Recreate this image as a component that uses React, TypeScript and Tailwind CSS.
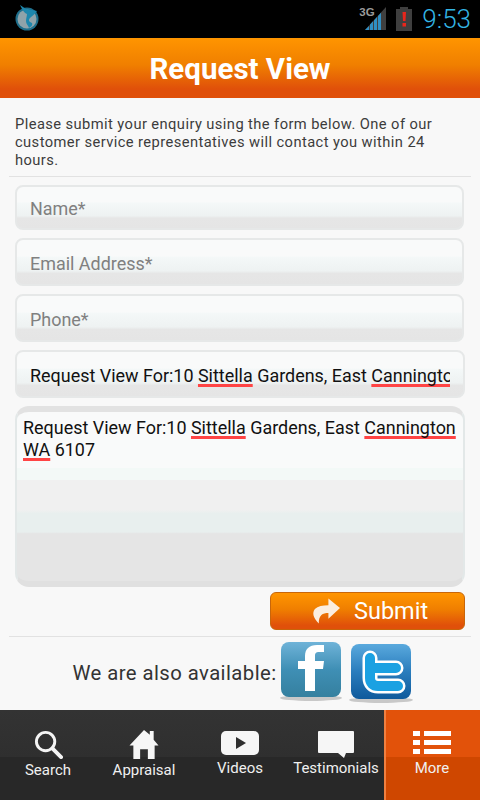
import React from 'react';

const fieldBg = 'bg-[linear-gradient(to_bottom,#f9fafa_0%,#f9fafa_36%,#f4f8f8_40%,#eef2f2_70%,#e6e6e6_76%,#e5e5e5_100%)]';

const Misspelt: React.FC<{ children: React.ReactNode }> = ({ children }) => (
  <span className="underline decoration-[#ff4444] decoration-[3px] underline-offset-[2px] [text-decoration-skip-ink:none]">{children}</span>
);

const Field: React.FC<{ label: string; className: string }> = ({ label, className }) => (
  <div className={`${className} ml-[15px] mr-[16px] flex items-center rounded-lg border-2 border-[#e6e8e8] pl-[13px] text-[17.950px] text-[#808080] ${fieldBg}`}>
    {label}
  </div>
);

const StatusBar = () => (
  <div className="flex h-[38px] items-center bg-black pl-[15px] pr-[9px]">
    <svg width="26" height="28" viewBox="0 0 26 28" className="mt-[-4px]">
      <circle cx="12" cy="16" r="11.500" fill="#1f6f8c" />
      <circle cx="12" cy="16" r="9.500" fill="#8fa3aa" />
      <path d="M5 2l6 4c4 1 8 1 11 2-2 3-5 5-7 7-2 2-1 4 2 5 1 2-1 4-3 5-1-3-3-4-3-7 0-3 1-5 1-7-3-1-5-5-7-9z" fill="#1d87ad" />
    </svg>
    <div className="ml-auto flex items-center">
      <div className="relative h-[24px] w-[27px]">
        <span className="absolute left-0 top-[-2px] font-['Liberation_Sans',sans-serif] text-[11.500px] font-bold leading-[14px] text-[#9a9a9a]">3G</span>
        <svg width="21" height="24" viewBox="0 0 21 24" className="absolute bottom-0 right-0">
          <path d="M0 23L21 0v23z" fill="#3f3f3f" />
          <path d="M0 23l4-4v4zM5 23v-5.500l3-3.300V23zM9 23v-9.800l3-3.300V23z" fill="#2f8fc4" />
          <path d="M13 23V9l3-3.300V23z" fill="#2f8fc4" />
        </svg>
      </div>
      <svg width="16" height="24" viewBox="0 0 16 24" className="ml-[10px]">
        <path d="M4 0h8v2h4v22H0V2h4z" fill="#3f3f3f" />
        <path d="M6.500 5h3.500l-.5 9H7zM6.500 16h3.500v3.500H6.500z" fill="#e8261c" />
      </svg>
      <span className="ml-[10px] font-['Roboto',sans-serif] text-[26px] font-light leading-none text-[#33b5e5]">9:53</span>
    </div>
  </div>
);

const FacebookIcon = () => (
  <svg width="62" height="60" viewBox="0 0 62 60">
    <defs>
      <linearGradient id="fb" x1="0" y1="0" x2="0" y2="1">
        <stop offset="0" stopColor="#6fb3d8" />
        <stop offset="0.5" stopColor="#3f8fb5" />
        <stop offset="1" stopColor="#35809f" />
      </linearGradient>
    </defs>
    <ellipse cx="31" cy="56" rx="31" ry="3" fill="#c8c8c8" />
    <rect x="1" y="0" width="60" height="55" rx="8" fill="url(#fb)" />
    <path d="M35 49V27h8l1-8h-9v-5c0-3 1-4 4-4h5V3h-7c-8 0-12 4-12 11v5h-7v8h7v22z" fill="#fff" />
  </svg>
);

const TwitterIcon = () => (
  <svg width="64" height="60" viewBox="0 0 64 60">
    <defs>
      <linearGradient id="tw" x1="0" y1="0" x2="0" y2="1">
        <stop offset="0" stopColor="#5aa9dd" />
        <stop offset="0.5" stopColor="#2a7dbd" />
        <stop offset="1" stopColor="#0f5a9c" />
      </linearGradient>
    </defs>
    <ellipse cx="32" cy="56" rx="32" ry="3" fill="#c8c8c8" />
    <rect x="2" y="0" width="60" height="55" rx="8" fill="url(#tw)" />
    <path d="M21 14v20c0 5 3 8 8 8h20M21 24h26" fill="none" stroke="#fff" strokeWidth="15" strokeLinecap="round" strokeLinejoin="round" />
    <path d="M21 14v20c0 5 3 8 8 8h20M21 24h26" fill="none" stroke="#1ba1e2" strokeWidth="10" strokeLinecap="round" strokeLinejoin="round" />
  </svg>
);

const icons: Record<string, React.ReactNode> = {
  Search: (
    <svg width="29" height="29" viewBox="0 0 30 30">
      <circle cx="12" cy="12" r="9.500" fill="none" stroke="#f4f4f4" strokeWidth="3" />
      <path d="M19 19l9 9" stroke="#f4f4f4" strokeWidth="4" strokeLinecap="round" />
    </svg>
  ),
  Appraisal: (
    <svg width="30" height="29" viewBox="0 0 30 30">
      <path d="M15 0l6 5V1h4v9l5 6h-4v14h-7V20h-8v10H4V16H0z" fill="#f6f6f6" />
    </svg>
  ),
  Videos: (
    <svg width="38" height="24" viewBox="0 0 38 24">
      <rect x="0" y="0" width="38" height="24" rx="5" fill="#f6f6f6" />
      <path d="M15 6l10 6-10 6z" fill="#2e2e2e" />
    </svg>
  ),
  Testimonials: (
    <svg width="36" height="28" viewBox="0 0 36 28">
      <path d="M1 0h34a1 1 0 0 1 1 1v20a1 1 0 0 1-1 1H28l-2 5-6-5H1a1 1 0 0 1-1-1V1a1 1 0 0 1 1-1z" fill="#f6f6f6" />
    </svg>
  ),
  More: (
    <svg width="38" height="24" viewBox="0 0 38 24">
      <path d="M0 0h7v5H0zM11 0h27v5H11zM0 9h7v5H0zM11 9h27v5H11zM0 18h7v5H0zM11 18h27v5H11z" fill="#fff" />
    </svg>
  ),
};

const tabs = [
  { label: 'Search', iconBox: 'h-[29px] mt-[20px]', gap: 'mt-[2px]' },
  { label: 'Appraisal', iconBox: 'h-[29px] mt-[20px]', gap: 'mt-[2px]' },
  { label: 'Videos', iconBox: 'h-[24px] mt-[21px]', gap: 'mt-[4px]' },
  { label: 'Testimonials', iconBox: 'h-[28px] mt-[21px]', gap: 'mt-[0px]' },
  { label: 'More', iconBox: 'h-[24px] mt-[21px]', gap: 'mt-[4px]' },
];

const TabBar = () => (
  <div className="grid h-[90px] grid-cols-5 bg-[linear-gradient(to_bottom,#333333_0%,#2f2f2f_52%,#282828_52%,#282828_100%)] text-[15px] text-[#f0f0f0]">
    {tabs.map((t) => {
      const active = t.label === 'More';
      return (
        <div
          key={t.label}
          className={`flex flex-col items-center whitespace-nowrap ${active ? 'border-l-2 border-[#f08040] bg-[linear-gradient(to_bottom,#e2520a_0%,#e2520a_52%,#cf4700_52%,#cf4700_100%)] pr-[2px]' : ''}`}
        >
          <div className={`flex items-center justify-center ${t.iconBox}`}>{icons[t.label]}</div>
          <div className={`leading-[18px] ${t.gap}`}>{t.label}</div>
        </div>
      );
    })}
  </div>
);

export default function App() {
  return (
    <div className="flex h-[800px] w-[480px] flex-col overflow-hidden bg-[#f8f8f8] font-['Roboto',sans-serif]">
      <StatusBar />
      <div className="flex h-[60px] items-center justify-center bg-[linear-gradient(to_bottom,#ff9500_0%,#f07f00_45%,#e0500a_85%,#e0500a_100%)] pt-[2px] text-[29.500px] font-bold text-white">
        Request View
      </div>

      <p className="mx-[15px] mt-[17px] text-[14.700px] leading-[18px] tracking-[0.42px] text-[#3c3c3c]">
        Please submit your enquiry using the form below. One of our customer service representatives will contact you within 24 hours.
      </p>
      <div className="mx-[9px] mt-[7px] h-[1px] bg-[#e2e2e2]" />

      <Field label="Name*" className="mt-[8px] h-[45px] pt-[3px]" />
      <Field label="Email Address*" className="mt-[8px] h-[48px] pt-[4px]" />
      <Field label="Phone*" className="mt-[8px] h-[48px] pt-[4px]" />
      <div className={`mx-[15px] mt-[8px] flex h-[48px] items-center rounded-lg border-2 border-[#e6e8e8] pl-[13px] pr-[13px] pt-[4px] text-[17.950px] text-[#111] ${fieldBg}`}>
        <div className="overflow-hidden whitespace-nowrap">
          Request View For:10 <Misspelt>Sittella</Misspelt> Gardens, East <Misspelt>Cannington</Misspelt> WA 6107
        </div>
      </div>

      <div className="mx-[15px] mt-[8px] h-[181px] rounded-[14px] border-x-2 border-y-[6px] border-x-[#e3e8e8] border-t-[#e2e2e2] border-b-[#e0e0e0] bg-[linear-gradient(to_bottom,#f9fafa_0%,#f9fafa_33%,#f3f9f7_33%,#f3f9f7_40%,#f0f0f0_40%,#f0f0f0_58%,#e8efee_60%,#e8efee_71%,#e5e5e5_72%,#e5e5e5_100%)] pl-[6px] pt-[5px] text-[17.950px] leading-[22px] text-[#111]">
        Request View For:10 <Misspelt>Sittella</Misspelt> Gardens, East <Misspelt>Cannington</Misspelt> <Misspelt>WA</Misspelt> 6107
      </div>

      <div className="mr-[15px] mt-[5px] flex justify-end">
        <div className="flex h-[38px] w-[195px] items-center rounded-md border border-[#c8660a] bg-[linear-gradient(to_bottom,#ff9500_0%,#f07f00_45%,#e0500a_90%,#e0500a_100%)] pl-[41px] pt-[2px] text-[23.500px] text-[#fff]">
          <svg width="28" height="26" viewBox="0 0 29 26" className="mr-[14px] mt-[-2px]">
            <path d="M17 0l12 10-12 11v-6c-6 0-10 2-10 11C1 20 0 15 3 11c3-3 8-4 14-4z" fill="#fbeee0" />
          </svg>
          Submit
        </div>
      </div>

      <div className="mx-[9px] mt-[6px] h-[1px] bg-[#e2e2e2]" />
      <div className="mt-[5px] flex items-start justify-center pl-[5px]">
        <span className="mt-[18px] text-[20.300px] leading-[26px] tracking-[0.44px] text-[#333]">We are also available:</span>
        <div className="ml-[3px]"><FacebookIcon /></div>
        <div className="ml-[7px] mt-[2px]"><TwitterIcon /></div>
      </div>

      <div className="mt-auto">
        <TabBar />
      </div>
    </div>
  );
}
